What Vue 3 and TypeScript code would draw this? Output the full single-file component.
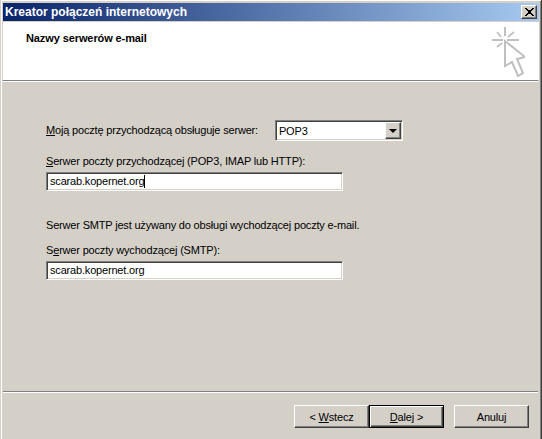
<script setup lang="ts">
const title = 'Kreator połączeń internetowych'
const server = 'scarab.kopernet.org'
</script>

<template>
  <div class="window">
    <div class="titlebar">
      <span class="title-text">{{ title }}</span>
      <button class="close" aria-label="Zamknij">
        <svg width="9" height="8" viewBox="0 0 9 8" shape-rendering="crispEdges">
          <path d="M0 0h2v1h1v1h3V1h1V0h2v1H8v1H7v1H6v2h1v1h1v1h1v1H7V7H6V6H3v1H2v1H0V7h1V6h1V5h1V3H2V2H1V1H0z" fill="#000" />
        </svg>
      </button>
    </div>
    <header class="header">
      <h1 class="heading">Nazwy serwerów e-mail</h1>
      <svg class="wizard-icon" width="36" height="52" viewBox="0 0 36 52">
        <g fill="none" stroke="#c0c0c0" stroke-width="2">
          <path d="M16 0v9M3 13h11M18 13h12" shape-rendering="crispEdges" />
          <path d="M8 5l4 5M25 5l-6 5M8 20l5-4" stroke-width="1.8" />
          <path d="M16 14v25l7-4 6 14 5-3-6-14 8-2z" fill="#fff" />
        </g>
      </svg>
    </header>
    <div class="rule"></div>
    <main class="body">
      <div class="combo-row">
        <label class="label"><u>M</u>oją pocztę przychodzącą obsługuje serwer:</label>
        <div class="combo">
          <span class="combo-value">POP3</span>
          <span class="combo-btn"><i class="arrow"></i></span>
        </div>
      </div>
      <label class="label gap-a"><u>S</u>erwer poczty przychodzącej (POP3, IMAP lub HTTP):</label>
      <div class="field">{{ server }}<span class="caret"></span></div>
      <p class="label note">Serwer SMTP jest używany do obsługi wychodzącej poczty e-mail.</p>
      <label class="label gap-b">S<u>e</u>rwer poczty wychodzącej (SMTP):</label>
      <div class="field">{{ server }}</div>
    </main>
    <div class="rule"></div>
    <footer class="footer">
      <button class="btn">&lt; <u>W</u>stecz</button>
      <button class="btn default"><u>D</u>alej &gt;</button>
      <button class="btn cancel">Anuluj</button>
    </footer>
  </div>
</template>

<style>
html, body { margin: 0; background: #d4d0c8; overflow: hidden; }
</style>

<style scoped>
.window {
  box-sizing: border-box;
  width: 542px;
  height: 439px;
  background: #d4d0c8;
  border-left: 1px solid #d4d0c8;
  border-right: 1px solid #404040;
  padding: 3px 2px 0 2px;
  box-shadow: inset 1px 1px 0 #fff, inset -1px 0 0 #808080;
  font-family: "Liberation Sans", Arial, sans-serif;
  font-size: 11px;
  letter-spacing: -0.18px;
  color: #000;
  display: flex;
  flex-direction: column;
}
.titlebar {
  height: 18px;
  flex: none;
  background: linear-gradient(to right, #0a246a, #a6caf0);
  display: flex;
  align-items: center;
  justify-content: space-between;
  padding: 0 2px;
}
.title-text {
  color: #fff;
  font-weight: 700;
  font-size: 12px;
  letter-spacing: 0;
}
.close {
  width: 16px;
  height: 14px;
  padding: 0;
  background: #d4d0c8;
  border: 1px solid;
  border-color: #fff #404040 #404040 #fff;
  box-shadow: inset -1px -1px 0 #808080;
  display: flex;
  align-items: center;
  justify-content: center;
}
.header {
  height: 58px;
  flex: none;
  margin-top: 1px;
  background: #fff;
  display: flex;
  justify-content: space-between;
  align-items: flex-start;
  padding: 0 14px 0 23px;
}
.heading {
  margin: 10px 0 0;
  font-size: 11px;
  line-height: 13px;
  font-weight: 700;
  letter-spacing: -0.1px;
}
.wizard-icon { margin-top: 5px; }
.rule {
  flex: none;
  height: 2px;
  margin-right: 1px;
  box-sizing: border-box;
  border-top: 1px solid #808080;
  border-bottom: 1px solid #fff;
}
.body {
  flex: 1;
  padding: 38px 0 0 43px;
  display: flex;
  flex-direction: column;
  align-items: flex-start;
}
.label {
  display: block;
  margin: 0;
  line-height: 13px;
  white-space: nowrap;
}
.combo-row {
  display: flex;
  align-items: center;
  height: 21px;
}
.combo {
  box-sizing: border-box;
  width: 128px;
  height: 21px;
  margin-left: 17px;
  background: #fff;
  border: 1px solid;
  border-color: #808080 #fff #fff #808080;
  box-shadow: inset 1px 1px 0 #404040, inset -1px -1px 0 #d4d0c8;
  display: flex;
  align-items: center;
  justify-content: space-between;
  padding: 1px 1px 1px 2px;
}
.combo-value { padding-left: 1px; }
.combo-btn {
  box-sizing: border-box;
  width: 16px;
  height: 17px;
  background: #d4d0c8;
  border: 1px solid;
  border-color: #fff #404040 #404040 #fff;
  box-shadow: inset -1px -1px 0 #808080;
  display: flex;
  align-items: center;
  justify-content: center;
}
.arrow {
  width: 0;
  height: 0;
  border-left: 4px solid transparent;
  border-right: 4px solid transparent;
  border-top: 4px solid #000;
}
.gap-a { margin-top: 14px; }
.gap-b { margin-top: 12px; }
.note { margin-top: 28px; }
.field {
  box-sizing: border-box;
  width: 297px;
  height: 19px;
  margin-top: 4px;
  background: #fff;
  border: 1px solid;
  border-color: #808080 #fff #fff #808080;
  box-shadow: inset 1px 1px 0 #404040, inset -1px -1px 0 #d4d0c8;
  padding: 2px 0 0 3px;
  line-height: 13px;
  display: flex;
}
.caret {
  width: 1px;
  height: 13px;
  background: #000;
}
.footer {
  flex: none;
  height: 46px;
  box-sizing: border-box;
  padding: 12px 10px 0 0;
  display: flex;
  justify-content: flex-end;
  align-items: flex-start;
}
.btn {
  box-sizing: border-box;
  width: 75px;
  height: 23px;
  padding: 0;
  background: #d4d0c8;
  border: 1px solid;
  border-color: #fff #404040 #404040 #fff;
  box-shadow: inset -1px -1px 0 #808080;
  font: inherit;
  letter-spacing: inherit;
  color: #000;
}
.default {
  border-color: #000;
  box-shadow: inset 1px 1px 0 #fff, inset -1px -1px 0 #404040, inset -2px -2px 0 #808080;
}
.cancel { margin-left: 10px; }
</style>
